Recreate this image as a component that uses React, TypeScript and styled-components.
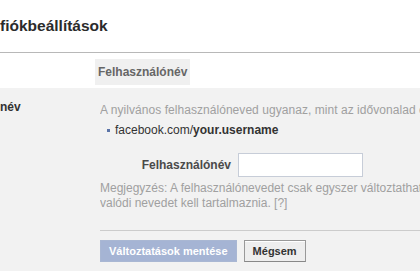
import React from "react";
import styled, { createGlobalStyle } from "styled-components";

const GlobalStyle = createGlobalStyle`
    body {
        margin: 0;
        background: #ffffff;
        font-family: "Liberation Sans", Arial, sans-serif;
    }
`;

const Page = styled.div`
    width: 420px;
    height: 280px;
    overflow: hidden;
    background: #ffffff;
`;

const Header = styled.div`
    height: 53px;
    border-bottom: 1px solid #b8b8b8;
    box-sizing: border-box;
    padding-top: 17px;
`;

const Title = styled.h2`
    margin: 0;
    font-size: 15.5px;
    line-height: 17px;
    font-weight: bold;
    color: #2b2b2b;
    white-space: nowrap;
`;

const TabRow = styled.div`
    display: flex;
    padding: 6px 0 3px 95px;
`;

const Tab = styled.div`
    background: #f0f0f0;
    padding: 0 3px;
    height: 26px;
    line-height: 26px;
    font-size: 12px;
    font-weight: bold;
    color: #666666;
`;

const Section = styled.div`
    display: grid;
    grid-template-columns: 100px 1fr;
    background: #f2f2f2;
    height: 183px;
`;

const SideLabel = styled.div`
    padding-top: 12px;
    font-size: 12px;
    line-height: 14px;
    font-weight: bold;
    color: #333333;
`;

const Content = styled.div`
    padding-top: 15px;
    min-width: 0;
    overflow: hidden;
`;

const Hint = styled.div<{ $top?: number; $spacing?: number }>`
    margin-top: ${(p) => p.$top ?? 0}px;
    font-size: 12px;
    line-height: 15px;
    letter-spacing: ${(p) => p.$spacing ?? 0}px;
    color: #a0a0a0;
    white-space: nowrap;
`;

const UrlLine = styled.div`
    display: flex;
    align-items: center;
    gap: 5px;
    margin: 5px 0 0 7px;
    font-size: 12px;
    line-height: 15px;
    color: #333333;
    white-space: nowrap;

    b {
        font-weight: bold;
    }
`;

const Bullet = styled.span`
    width: 3px;
    height: 3px;
    background: #5b74a8;
`;

const FormRow = styled.div`
    display: flex;
    align-items: center;
    margin-top: 15px;
    height: 24px;
`;

const FieldLabel = styled.label`
    width: 131px;
    padding-right: 7px;
    text-align: right;
    font-size: 12px;
    font-weight: bold;
    color: #4a4a4a;
`;

const TextInput = styled.input`
    box-sizing: border-box;
    width: 125px;
    height: 24px;
    border: 1px solid #c7cdd8;
    background: #ffffff;
    margin: 0;
    padding: 3px;
`;

const Divider = styled.div`
    margin-top: 19px;
    height: 1px;
    background: #cccccc;
`;

const Buttons = styled.div`
    display: flex;
    gap: 7px;
    margin-top: 9px;
`;

const Button = styled.button<{ $primary?: boolean }>`
    height: 22px;
    padding: 0 8px;
    font-family: "Liberation Sans", Arial, sans-serif;
    font-size: 11px;
    font-weight: bold;
    border: 1px solid ${(p) => (p.$primary ? "#a9b7d3" : "#999999")};
    background: ${(p) => (p.$primary ? "#a5b4d4" : "#eeeeee")};
    color: ${(p) => (p.$primary ? "#ffffff" : "#333333")};
    box-shadow: ${(p) => (p.$primary ? "none" : "inset 0 1px 0 #ffffff")};
    border-bottom-color: ${(p) => (p.$primary ? "#a9b7d3" : "#888888")};
`;

export default function App() {
    return (
        <Page>
            <GlobalStyle />
            <Header>
                <Title>fiókbeállítások</Title>
            </Header>
            <TabRow>
                <Tab>Felhasználónév</Tab>
            </TabRow>
            <Section>
                <SideLabel>név</SideLabel>
                <Content>
                    <Hint $spacing={0.05}>
                        A nyilvános felhasználóneved ugyanaz, mint az idővonalad címe.
                    </Hint>
                    <UrlLine>
                        <Bullet />
                        <span>
                            facebook.com/<b>your.username</b>
                        </span>
                    </UrlLine>
                    <FormRow>
                        <FieldLabel>Felhasználónév</FieldLabel>
                        <TextInput type="text" />
                    </FormRow>
                    <Hint $top={4}>
                        Megjegyzés: A felhasználónevedet csak egyszer változtathatod
                        <br />
                        valódi nevedet kell tartalmaznia. [?]
                    </Hint>
                    <Divider />
                    <Buttons>
                        <Button $primary>Változtatások mentése</Button>
                        <Button>Mégsem</Button>
                    </Buttons>
                </Content>
            </Section>
        </Page>
    );
}
